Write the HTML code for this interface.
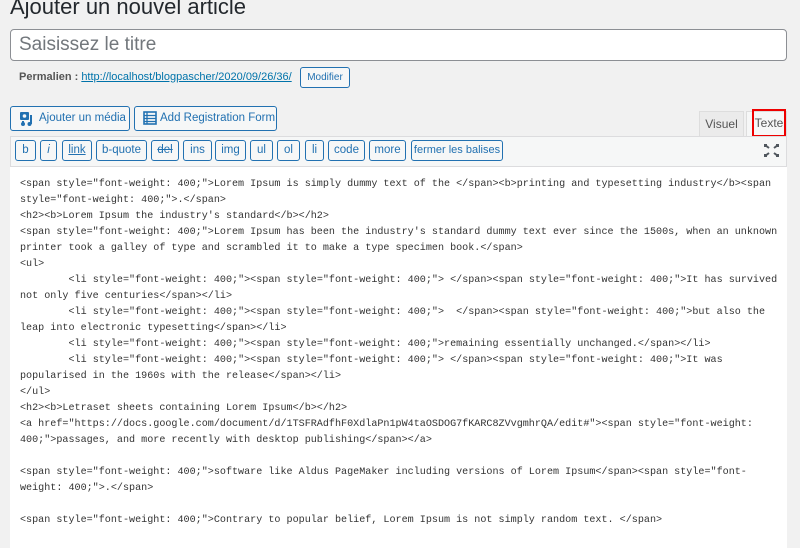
<!DOCTYPE html>
<html><head><meta charset="utf-8"><style>
*{box-sizing:border-box;margin:0;padding:0}
body{width:800px;height:548px;overflow:hidden;background:#f1f1f1;font-family:"Liberation Sans",sans-serif;color:#23282d;position:relative}
.abs{position:absolute}
h1{position:absolute;left:10px;top:-6px;font-size:22px;font-weight:400;color:#23282d}
.title{left:10px;top:29px;width:777px;height:32px;background:#fff;border:1px solid #8c8f94;border-radius:4px;font-size:19px;color:#72777c;padding:4px 8px;line-height:22px}
.perma{left:19px;top:71px;font-size:11px;color:#555;white-space:nowrap}
.perma b{font-weight:700;color:#555}
.perma a{color:#0073aa;text-decoration:underline;margin-left:3px}
.btn{position:absolute;border:1px solid #2271b1;border-radius:3px;color:#2271b1;background:#f6f7f7;font-size:11px;text-align:center;white-space:nowrap;overflow:hidden}
.mb{top:106px;height:25px;font-size:11.5px;color:#2271b1;line-height:23px;text-align:left;padding-left:8px;background:#f6f7f7}
.tab{position:absolute;top:111px;height:25px;font-size:12px;color:#555;line-height:24px;text-align:center}
.toolbar{left:10px;top:136px;width:777px;height:31px;background:#f6f7f7;border:1px solid #dcdcde;border-bottom:1px solid #dcdcde}
.qt{top:140px;height:21px;line-height:19px;color:#2271b1;background:#f6f7f7;font-size:11.5px}
.editor{left:10px;top:167px;width:777px;height:381px;background:#fff}
pre{position:absolute;left:20px;top:177px;font-family:"Liberation Mono",monospace;font-size:10.1px;line-height:16px;color:#333;white-space:pre;tab-size:8}
</style></head><body>
<h1>Ajouter un nouvel article</h1>
<div class="abs title">Saisissez le titre</div>
<div class="abs perma"><b>Permalien :</b><a>http://localhost/blogpascher/2020/09/26/36/</a></div>
<div class="btn" style="left:300px;top:67px;width:50px;height:21px;line-height:19px;font-size:10px">Modifier</div>

<div class="btn mb" style="left:10px;width:120px"><svg width="16" height="16" viewBox="0 0 16 16" style="position:absolute;left:8px;top:4px"><rect x="1" y="1" width="9" height="8" rx="1" fill="#2271b1"/><circle cx="5.5" cy="5" r="1.8" fill="#f6f7f7"/><path d="M12 4v9" stroke="#2271b1" stroke-width="2"/><circle cx="10.5" cy="13" r="2" fill="#2271b1"/><circle cx="4" cy="13" r="2" fill="#2271b1"/><path d="M4 10v3" stroke="#2271b1" stroke-width="2"/></svg><span style="margin-left:20px">Ajouter un média</span></div>
<div class="btn mb" style="left:134px;width:143px"><svg width="14" height="14" viewBox="0 0 14 14" style="position:absolute;left:8px;top:4px"><rect x="1" y="1" width="12" height="12" fill="none" stroke="#2271b1" stroke-width="1.6"/><path d="M1 4.5h12M1 7.5h12M1 10.5h12M4 1v12" stroke="#2271b1" stroke-width="1.3"/></svg><span style="margin-left:17px">Add Registration Form</span></div>

<div class="tab" style="left:699px;width:45px;background:#ebebeb;border:1px solid #ddd;border-bottom:none">Visuel</div>
<div class="tab" style="left:746px;width:41px;background:#f6f7f7;border:1px solid #ddd;border-bottom:none"></div>
<div class="tab" style="left:752px;top:109px;width:34px;height:28px;border:2px solid #e00;line-height:24px;color:#555">Texte</div>

<div class="abs toolbar"></div>
<div class="btn qt" style="left:15px;width:21px">b</div>
<div class="btn qt" style="left:40px;width:17px;font-style:italic">i</div>
<div class="btn qt" style="left:62px;width:30px;text-decoration:underline">link</div>
<div class="btn qt" style="left:96px;width:51px">b-quote</div>
<div class="btn qt" style="left:151px;width:28px;text-decoration:line-through">del</div>
<div class="btn qt" style="left:183px;width:29px">ins</div>
<div class="btn qt" style="left:215px;width:31px">img</div>
<div class="btn qt" style="left:250px;width:23px">ul</div>
<div class="btn qt" style="left:277px;width:23px">ol</div>
<div class="btn qt" style="left:305px;width:19px">li</div>
<div class="btn qt" style="left:328px;width:37px">code</div>
<div class="btn qt" style="left:369px;width:37px">more</div>
<div class="btn qt" style="left:411px;width:92px;font-size:11px">fermer les balises</div>
<svg class="abs" style="left:764px;top:144px" width="15" height="13" viewBox="0 0 15 13"><path d="M1 1l4 3M14 1l-4 3M1 12l4-3M14 12l-4-3" stroke="#50575e" stroke-width="2"/><rect x="0" y="0" width="3" height="3" fill="#50575e"/><rect x="12" y="0" width="3" height="3" fill="#50575e"/><rect x="0" y="10" width="3" height="3" fill="#50575e"/><rect x="12" y="10" width="3" height="3" fill="#50575e"/></svg>

<div class="abs editor"></div>
<pre>&lt;span style="font-weight: 400;"&gt;Lorem Ipsum is simply dummy text of the &lt;/span&gt;&lt;b&gt;printing and typesetting industry&lt;/b&gt;&lt;span
style="font-weight: 400;"&gt;.&lt;/span&gt;
&lt;h2&gt;&lt;b&gt;Lorem Ipsum the industry's standard&lt;/b&gt;&lt;/h2&gt;
&lt;span style="font-weight: 400;"&gt;Lorem Ipsum has been the industry's standard dummy text ever since the 1500s, when an unknown
printer took a galley of type and scrambled it to make a type specimen book.&lt;/span&gt;
&lt;ul&gt;
	&lt;li style="font-weight: 400;"&gt;&lt;span style="font-weight: 400;"&gt; &lt;/span&gt;&lt;span style="font-weight: 400;"&gt;It has survived
not only five centuries&lt;/span&gt;&lt;/li&gt;
	&lt;li style="font-weight: 400;"&gt;&lt;span style="font-weight: 400;"&gt;  &lt;/span&gt;&lt;span style="font-weight: 400;"&gt;but also the
leap into electronic typesetting&lt;/span&gt;&lt;/li&gt;
	&lt;li style="font-weight: 400;"&gt;&lt;span style="font-weight: 400;"&gt;remaining essentially unchanged.&lt;/span&gt;&lt;/li&gt;
	&lt;li style="font-weight: 400;"&gt;&lt;span style="font-weight: 400;"&gt; &lt;/span&gt;&lt;span style="font-weight: 400;"&gt;It was
popularised in the 1960s with the release&lt;/span&gt;&lt;/li&gt;
&lt;/ul&gt;
&lt;h2&gt;&lt;b&gt;Letraset sheets containing Lorem Ipsum&lt;/b&gt;&lt;/h2&gt;
&lt;a href="https://docs.google.com/document/d/1TSFRAdfhF0XdlaPn1pW4taOSDOG7fKARC8ZVvgmhrQA/edit#"&gt;&lt;span style="font-weight:
400;"&gt;passages, and more recently with desktop publishing&lt;/span&gt;&lt;/a&gt;

&lt;span style="font-weight: 400;"&gt;software like Aldus PageMaker including versions of Lorem Ipsum&lt;/span&gt;&lt;span style="font-
weight: 400;"&gt;.&lt;/span&gt;

&lt;span style="font-weight: 400;"&gt;Contrary to popular belief, Lorem Ipsum is not simply random text. &lt;/span&gt;</pre>
</body></html>
